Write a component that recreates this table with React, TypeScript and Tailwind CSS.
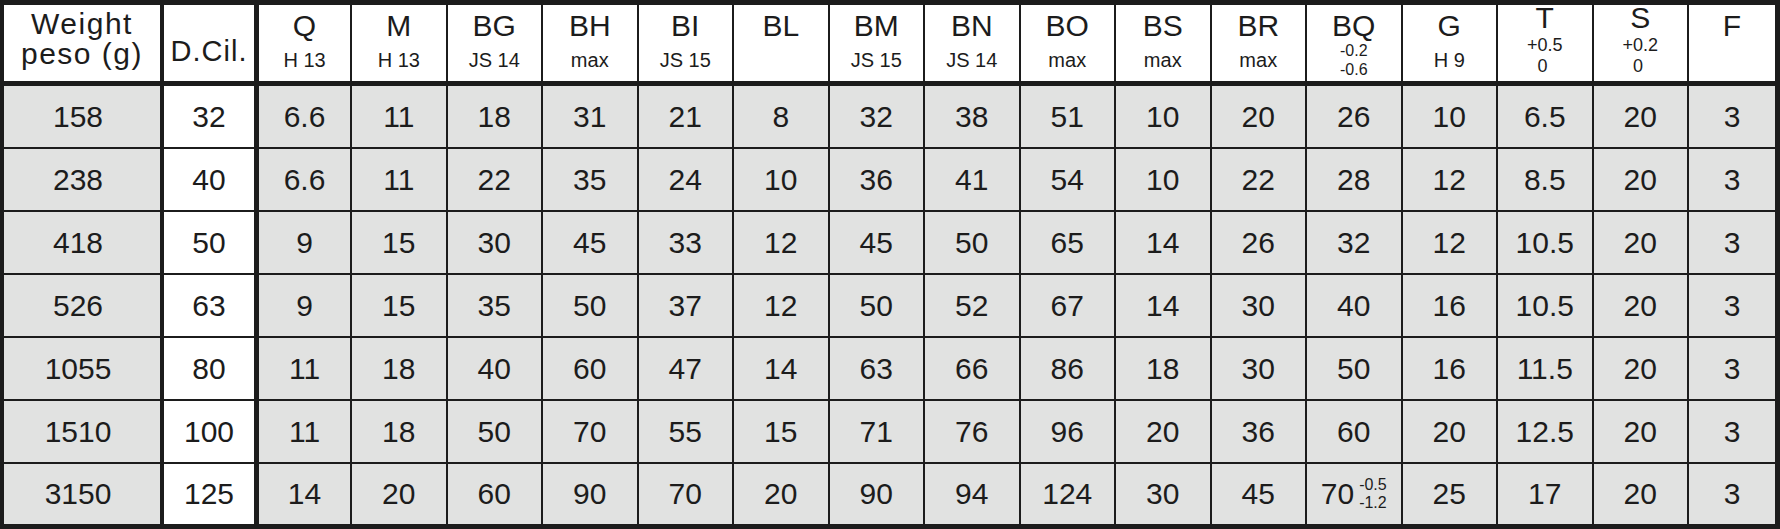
import React from "react";

type Col = { t: string; s?: string; tol?: [string, string]; up?: boolean };

const cols: Col[] = [
  { t: "Q", s: "H 13" },
  { t: "M", s: "H 13" },
  { t: "BG", s: "JS 14" },
  { t: "BH", s: "max" },
  { t: "BI", s: "JS 15" },
  { t: "BL" },
  { t: "BM", s: "JS 15" },
  { t: "BN", s: "JS 14" },
  { t: "BO", s: "max" },
  { t: "BS", s: "max" },
  { t: "BR", s: "max" },
  { t: "BQ", tol: ["-0.2", "-0.6"] },
  { t: "G", s: "H 9" },
  { t: "T", tol: ["+0.5", "0"], up: true },
  { t: "S", tol: ["+0.2", "0"], up: true },
  { t: "F" },
];

const rows: string[][] = [
  ["158", "32", "6.6", "11", "18", "31", "21", "8", "32", "38", "51", "10", "20", "26", "10", "6.5", "20", "3"],
  ["238", "40", "6.6", "11", "22", "35", "24", "10", "36", "41", "54", "10", "22", "28", "12", "8.5", "20", "3"],
  ["418", "50", "9", "15", "30", "45", "33", "12", "45", "50", "65", "14", "26", "32", "12", "10.5", "20", "3"],
  ["526", "63", "9", "15", "35", "50", "37", "12", "50", "52", "67", "14", "30", "40", "16", "10.5", "20", "3"],
  ["1055", "80", "11", "18", "40", "60", "47", "14", "63", "66", "86", "18", "30", "50", "16", "11.5", "20", "3"],
  ["1510", "100", "11", "18", "50", "70", "55", "15", "71", "76", "96", "20", "36", "60", "20", "12.5", "20", "3"],
  ["3150", "125", "14", "20", "60", "90", "70", "20", "90", "94", "124", "30", "45", "70*", "25", "17", "20", "3"],
];

// right border of each column
function rightBorder(i: number) {
  if (i === 0) return "border-r-4";
  if (i === 1) return "border-r-[5px]";
  if (i === 17) return "";
  return "border-r-2";
}

function HeaderCell({ c, i }: { c: Col; i: number }) {
  return (
    <div
      className={`${rightBorder(i + 2)} border-b-[5px] border-[#1c1c1c] bg-white flex flex-col items-center ${
        c.up ? "pt-0" : "pt-[6px]"
      }`}
    >
      <span className={`text-[30px] ${c.up ? "leading-[26px]" : "leading-[30px]"}`}>{c.t}</span>
      {c.s && <span className="mt-[9px] text-[20px] leading-[20px]">{c.s}</span>}
      {c.tol && !c.up && (
        <div className="mt-[1px] flex flex-col items-center text-[16px] leading-[18.5px]">
          <span>{c.tol[0]}</span>
          <span>{c.tol[1]}</span>
        </div>
      )}
      {c.tol && c.up && (
        <div className="mt-[4px] flex flex-col items-start text-[18px] leading-[20.7px]">
          <span>{c.tol[0]}</span>
          <span>
            <span className="invisible">+</span>
            {c.tol[1]}
          </span>
        </div>
      )}
    </div>
  );
}

export default function App() {
  return (
    <div
      className="w-[1780px] h-[529px] bg-white text-[#1c1c1c]"
      style={{ fontFamily: '"Liberation Sans", Arial, sans-serif' }}
    >
      <div className="grid h-full grid-cols-[160px_95px_93px_repeat(14,95.5px)_1fr] grid-rows-[81px_repeat(6,63px)_1fr] border-[5px] border-l-4 border-[#1c1c1c]">
        {/* Header */}
        <div className="border-r-4 border-b-[5px] border-[#1c1c1c] bg-white pt-[4px] text-center text-[30px] leading-[30px] tracking-[1.5px]">
          Weight
          <br />
          peso (g)
        </div>
        <div className="border-r-[5px] border-b-[5px] border-[#1c1c1c] bg-white pt-[31px] text-center text-[29px] leading-[30px] tracking-[1px]">
          D.Cil.
        </div>
        {cols.map((c, i) => (
          <HeaderCell key={c.t} c={c} i={i} />
        ))}

        {/* Body */}
        {rows.map((r, ri) =>
          r.map((v, ci) => (
            <div
              key={`${ri}-${ci}`}
              className={`${rightBorder(ci)} ${ri < rows.length - 1 ? "border-b-2" : ""} border-[#1c1c1c] ${
                ci === 1 ? "bg-white" : "bg-[#e1e2e1]"
              } flex items-center justify-center text-[30px] leading-none ${ci === 0 ? "pr-2" : ""}`}
            >
              {v === "70*" ? (
                <div className="flex items-center gap-[5px]">
                  <span>70</span>
                  <div className="flex flex-col text-[16px] leading-[18.5px]">
                    <span>-0.5</span>
                    <span>-1.2</span>
                  </div>
                </div>
              ) : (
                v
              )}
            </div>
          ))
        )}
      </div>
    </div>
  );
}
